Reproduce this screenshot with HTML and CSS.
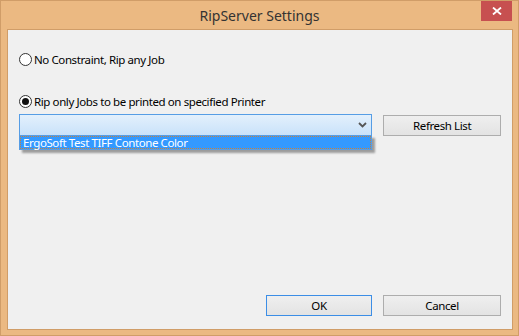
FILE: index.html
```html
<!DOCTYPE html>
<html lang="en">
<head>
    <meta charset="UTF-8">
    <title>RipServer Settings</title>
    <link rel="stylesheet" href="styles.css">
</head>
<body>
    <div class="window">
        <div class="titlebar">
            <div class="title">RipServer Settings</div>
            <div class="close-btn">
                <svg width="10" height="8" viewBox="0 0 10 8">
                    <path d="M1 0.5 L9 7.5 M9 0.5 L1 7.5" stroke="#fff" stroke-width="1.8" fill="none"/>
                </svg>
            </div>
        </div>
        <div class="client">
            <div class="options">
                <label class="radio-row first">
                    <span class="radio"></span>
                    <span class="radio-text">No Constraint, Rip any Job</span>
                </label>
                <label class="radio-row second">
                    <span class="radio checked"></span>
                    <span class="radio-text">Rip only Jobs to be printed on specified Printer</span>
                </label>
                <div class="printer-row">
                    <div class="combo">
                        <svg class="chevron" width="9" height="6" viewBox="0 0 9 6">
                            <path d="M1 1 L4.5 4.5 L8 1" stroke="#555" stroke-width="1.8" fill="none"/>
                        </svg>
                        <div class="combo-list">
                            <div class="combo-item">ErgoSoft Test TIFF Contone Color</div>
                        </div>
                    </div>
                    <div class="btn refresh">Refresh List</div>
                </div>
            </div>
            <div class="actions">
                <div class="btn ok">OK</div>
                <div class="btn cancel">Cancel</div>
            </div>
        </div>
    </div>
</body>
</html>
```

FILE: styles.css
```css
body {
    margin: 0;
    font-family: 'Noto Sans', 'Open Sans', sans-serif;
    background: #ebb982;
}

.window {
    width: 519px;
    height: 336px;
    box-sizing: border-box;
    border: 1px solid #d09d68;
    background: #ebb982;
    display: flex;
    flex-direction: column;
}

/* Title bar */
.titlebar {
    position: relative;
    height: 28px;
    flex-shrink: 0;
}

.title {
    text-align: center;
    font-size: 14px;
    line-height: 30px;
    color: #333;
}

.close-btn {
    position: absolute;
    top: 0;
    right: 6px;
    width: 31px;
    height: 20px;
    background: #c75050;
    display: flex;
    align-items: center;
    justify-content: center;
}

/* Client area */
.client {
    flex: 1;
    margin: 0 5px 5px 6px;
    border: 1px solid #d09d68;
    background: #f0f0f0;
    display: flex;
    flex-direction: column;
    justify-content: space-between;
    padding: 0 11px 13px 11px;
    font-size: 11.5px;
    letter-spacing: -0.4px;
    color: #000;
}

.radio-row {
    display: flex;
    align-items: center;
    gap: 2px;
    height: 13px;
}

.radio-row.first {
    margin-top: 23px;
}

.radio-row.second {
    margin-top: 29px;
}

.radio {
    width: 13px;
    height: 13px;
    box-sizing: border-box;
    border: 1px solid #333;
    border-radius: 50%;
    background: #fff;
    display: flex;
    align-items: center;
    justify-content: center;
}

.radio.checked::after {
    content: '';
    width: 7px;
    height: 7px;
    border-radius: 50%;
    background: #111;
}

.printer-row {
    display: flex;
    gap: 11px;
    margin-top: 6px;
}

.combo {
    position: relative;
    width: 354px;
    height: 22px;
    box-sizing: border-box;
    border: 1px solid #569de5;
    background: linear-gradient(#e3f0fc, #c9e2fa);
}

.chevron {
    position: absolute;
    right: 4px;
    top: 7px;
}

.combo-list {
    position: absolute;
    left: -1px;
    top: 20px;
    width: 353px;
    height: 15px;
    box-sizing: border-box;
    border: 1px solid #569de5;
    background: #3399ff;
    box-shadow: 3px 3px 2px rgba(0, 0, 0, 0.35);
}

.combo-item {
    height: 13px;
    box-sizing: border-box;
    border: 1px dotted #c8813a;
    color: #fff;
    line-height: 11px;
    padding-left: 2px;
}

.btn {
    box-sizing: border-box;
    height: 21px;
    border: 1px solid #adadad;
    background: linear-gradient(#efefef, #e3e3e3);
    display: flex;
    align-items: center;
    justify-content: center;
}

.refresh {
    width: 118px;
    margin-top: 1px;
}

.actions {
    display: flex;
    justify-content: flex-end;
    gap: 11px;
}

.ok {
    width: 106px;
    border-color: #3c8ee6;
}

.cancel {
    width: 118px;
}
```
